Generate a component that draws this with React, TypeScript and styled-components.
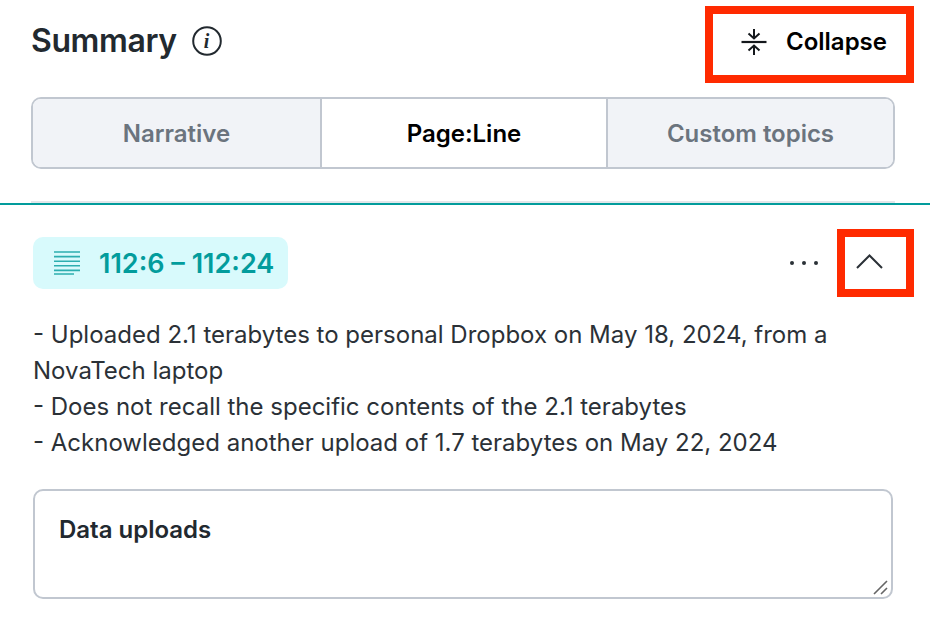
import React from "react";
import styled, { createGlobalStyle } from "styled-components";

const Global = createGlobalStyle`
  html, body { margin: 0; padding: 0; background: #fff; }
  body { font-family: Inter, "Liberation Sans", sans-serif; width: 930px; height: 624px; overflow: hidden; }
`;
const Page = styled.div`
  width: 930px;
  height: 624px;
  display: flex;
  flex-direction: column;
  box-sizing: border-box;
`;
const Top = styled.section`
  padding: 6px 35px 0 31px;
  display: flex;
  flex-direction: column;
`;
const HeaderRow = styled.header`
  display: flex;
  align-items: center;
  justify-content: space-between;
  margin-right: -19px;
  height: 77px;
`;
const TitleGroup = styled.div`
  display: flex;
  align-items: center;
  gap: 15px;
  padding-bottom: 7px;
`;
const Title = styled.h1`
  margin: 0;
  font-size: 32px;
  line-height: 40px;
  font-weight: 600;
  letter-spacing: -0.4px;
  color: #22292f;
`;
const InfoIcon = styled.svg`
  width: 30px;
  height: 30px;
  display: block;
`;
const InfoI = styled.span`
  position: absolute;
  inset: 0;
  display: flex;
  align-items: center;
  justify-content: center;
  font-family: "Liberation Serif", serif;
  font-style: italic;
  font-weight: 700;
  font-size: 20px;
  color: #22292f;
`;
const InfoWrap = styled.span`
  position: relative;
  width: 30px;
  height: 30px;
  display: block;
`;
const CollapseButton = styled.button`
  box-sizing: border-box;
  width: 209px;
  height: 77px;
  border: 8px solid #ff2a00;
  background: #fff;
  display: flex;
  align-items: center;
  padding: 0 0 6px 28px;
  gap: 19px;
  font: 600 24px/30px Inter, sans-serif;
  color: #000;
`;
const Tabs = styled.div`
  margin-top: 14px;
  height: 72px;
  box-sizing: border-box;
  border: 2px solid #c1c7d0;
  border-radius: 10px;
  display: grid;
  grid-template-columns: 287px 286px 1fr;
  overflow: hidden;
`;
const Tab = styled.div<{ $active?: boolean }>`
  display: flex;
  align-items: center;
  justify-content: center;
  font-size: 24px;
  font-weight: 600;
  letter-spacing: -0.02px;
  background: ${(p) => (p.$active ? "#fff" : "#f1f3f7")};
  color: ${(p) => (p.$active ? "#000" : "#6b747e")};
  & + & { border-left: 2px solid #c1c7d0; }
`;
const Rule = styled.div`
  margin-top: 32px;
  height: 2px;
  background: #e3e6ea;
`;
const TealRule = styled.div`
  height: 2px;
  background: #029c9c;
`;
const Entry = styled.section`
  padding: 24px 16px 0 33px;
  display: flex;
  flex-direction: column;
`;
const EntryHead = styled.div`
  display: flex;
  align-items: center;
  justify-content: space-between;
  height: 68px;
`;
const RefPill = styled.div`
  width: 255px;
  height: 52px;
  border-radius: 10px;
  background: #d8fafc;
  display: flex;
  align-items: center;
  gap: 19px;
  padding-left: 21px;
  box-sizing: border-box;
  font-size: 27px;
  font-weight: 600;
  color: #029c9c;
  white-space: nowrap;
`;
const Actions = styled.div`
  display: flex;
  align-items: center;
  gap: 16px;
`;
const Dots = styled.svg`
  width: 32px;
  height: 8px;
  display: block;
`;
const ChevronBox = styled.button`
  box-sizing: border-box;
  width: 77px;
  height: 68px;
  border: 8px solid #ff2a00;
  background: #fff;
  padding: 0 12px 4px 0;
  display: flex;
  align-items: center;
  justify-content: center;
`;
const Bullets = styled.div`
  margin: 20px 0 0;
  width: 810px;
  font-size: 24px;
  line-height: 36px;
  font-weight: 400;
  color: #2b3137;
`;
const NoteBox = styled.div`
  position: relative;
  box-sizing: border-box;
  margin-top: 28px;
  width: 860px;
  height: 110px;
  border: 2px solid #c1c7d0;
  border-radius: 10px;
  padding: 24px 24px;
  font-size: 24px;
  line-height: 30px;
  font-weight: 600;
  color: #22292f;
`;
const Grip = styled.svg`
  position: absolute;
  right: 1px;
  bottom: 1px;
  width: 18px;
  height: 18px;
`;

export default function App() {
  return (
    <Page>
      <Global />
      <Top>
        <HeaderRow>
          <TitleGroup>
            <Title>Summary</Title>
            <InfoWrap>
              <InfoIcon viewBox="0 0 30 30">
                <circle cx="15" cy="15" r="13.8" fill="none" stroke="#22292f" strokeWidth="2" />
              </InfoIcon>
              <InfoI>i</InfoI>
            </InfoWrap>
          </TitleGroup>
          <CollapseButton>
            <svg width="26" height="28" viewBox="0 0 26 28" fill="none" stroke="#14181c" strokeWidth="2">
              <path d="M0.5 14H25.5" strokeWidth="2.2" />
              <path d="M13 1V10M7.5 5.5L13 10.5L18.5 5.5" />
              <path d="M13 27V18M7.5 22.5L13 17.5L18.5 22.5" />
            </svg>
            Collapse
          </CollapseButton>
        </HeaderRow>
        <Tabs>
          <Tab>Narrative</Tab>
          <Tab $active>Page:Line</Tab>
          <Tab>Custom topics</Tab>
        </Tabs>
        <Rule />
      </Top>
      <TealRule />
      <Entry>
        <EntryHead>
          <RefPill>
            <svg width="26" height="24" viewBox="0 0 26 24" stroke="#029c9c" strokeWidth="1.6" opacity="0.8">
              <path d="M0 1H26M0 5.6H26M0 10.2H26M0 14.8H26M0 19.4H26M0 23H20" />
            </svg>
            112:6 – 112:24
          </RefPill>
          <Actions>
            <Dots viewBox="0 0 32 8">
              <circle cx="3" cy="4" r="2" fill="#2b3137" />
              <circle cx="15" cy="4" r="2" fill="#2b3137" />
              <circle cx="27" cy="4" r="2" fill="#2b3137" />
            </Dots>
            <ChevronBox>
              <svg width="27" height="15" viewBox="0 0 27 15" fill="none" stroke="#2b3137" strokeWidth="2">
                <path d="M1 14L13.5 1.5L26 14" />
              </svg>
            </ChevronBox>
          </Actions>
        </EntryHead>
        <Bullets>
          - Uploaded 2.1 terabytes to personal Dropbox on May 18, 2024, from a NovaTech laptop
          <br />- Does not recall the specific contents of the 2.1 terabytes
          <br />- Acknowledged another upload of 1.7 terabytes on May 22, 2024
        </Bullets>
        <NoteBox>
          Data uploads
          <Grip viewBox="0 0 18 18" stroke="#666" strokeWidth="1.6">
            <path d="M2 16L15 3M9 16L15 10" />
          </Grip>
        </NoteBox>
      </Entry>
    </Page>
  );
}
